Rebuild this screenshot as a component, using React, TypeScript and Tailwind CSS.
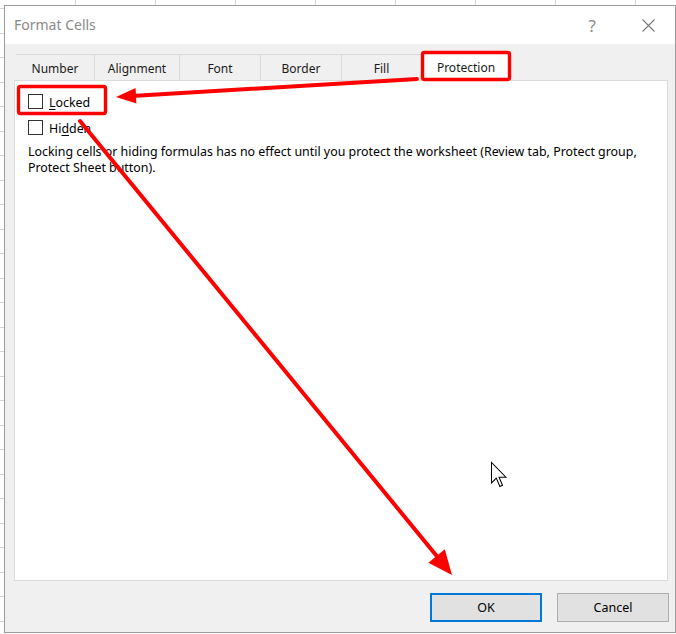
import React from "react";

export default function App() {
  return (
    <div className="relative w-[676px] h-[634px] overflow-hidden bg-white font-['Noto_Sans',sans-serif] text-black">
      {/* Excel grid behind the dialog */}
      <div className="h-[5px] bg-[repeating-linear-gradient(to_right,#ffffff_0px,#ffffff_75px,#d4d4d4_75px,#d4d4d4_76px,#ffffff_76px,#ffffff_80px)]" />
      <div className="flex">
        <div className="w-[4px] h-[629px] shrink-0 bg-[repeating-linear-gradient(to_bottom,#ffffff_0px,#ffffff_3px,#d4d4d4_3px,#d4d4d4_4px,#ffffff_4px,#ffffff_24.5px)]" />

        {/* Dialog */}
        <div className="w-[672px] h-[628px] shrink-0 border border-[#9c9c9c] bg-[#f0f0f0] flex flex-col">
          {/* Title bar */}
          <div className="h-[38px] shrink-0 bg-white flex items-center pl-[9px]">
            <span className="text-[14px] text-[#8a8a8a] leading-none">Format Cells</span>
            <span className="ml-auto mr-[46px] text-[17px] text-[#8a8a8a] leading-none">?</span>
            <svg width="13" height="13" viewBox="0 0 13 13" className="mr-[20px]">
              <path d="M0.5 0.5 L12.5 12.5 M12.5 0.5 L0.5 12.5" stroke="#7a7a7a" strokeWidth="1.1" fill="none" />
            </svg>
          </div>

          {/* Body */}
          <div className="pl-[9px] pt-[7px] flex flex-col">
            {/* Tabs */}
            <div className="ml-[2px] flex items-end h-[29px] text-[12px] text-[#1a1a1a]">
              <div className="w-[79px] h-[26px] border-t border-r border-[#dadada] flex items-center justify-center pt-[2px]">Number</div>
              <div className="w-[85px] h-[26px] border-t border-r border-[#dadada] flex items-center justify-center pt-[2px]">Alignment</div>
              <div className="w-[81px] h-[26px] border-t border-r border-[#dadada] flex items-center justify-center pt-[2px]">Font</div>
              <div className="w-[81px] h-[26px] border-t border-r border-[#dadada] flex items-center justify-center pt-[2px]">Border</div>
              <div className="w-[79px] h-[26px] border-t border-[#dadada] flex items-center justify-center pt-[2px]">Fill</div>
              <div className="relative z-10 -mb-px w-[90px] h-[30px] bg-white border-l border-t border-r border-[#dadada] flex items-center justify-center pt-[3px]">Protection</div>
            </div>

            {/* Panel */}
            <div className="w-[654px] h-[501px] border border-[#dadada] bg-white pl-[13px] pt-[13px] text-[12.4px]">
              <div className="flex items-center h-[15px]">
                <div className="w-[15px] h-[15px] border border-[#333333] bg-white" />
                <span className="ml-[6px] leading-none pt-[4px]">
                  <span className="underline underline-offset-2">L</span>ocked
                </span>
              </div>
              <div className="flex items-center h-[15px] mt-[11px]">
                <div className="w-[15px] h-[15px] border border-[#333333] bg-white" />
                <span className="ml-[6px] leading-none pt-[3px]">
                  Hi<span className="underline underline-offset-2">d</span>den
                </span>
              </div>
              <p className="mt-[9px] leading-[16px] whitespace-nowrap">
                Locking cells or hiding formulas has no effect until you protect the worksheet (Review tab, Protect group,
                <br />
                Protect Sheet button).
              </p>
            </div>

            {/* Buttons */}
            <div className="w-[655px] mt-[12px] flex justify-end gap-[15px] text-[12.5px]">
              <button className="w-[112px] h-[29px] border-2 border-[#0078d7] bg-[#e1e1e1] flex items-center justify-center pt-[2px]">OK</button>
              <button className="w-[112px] h-[29px] border border-[#adadad] bg-[#e1e1e1] flex items-center justify-center pt-[2px]">Cancel</button>
            </div>
          </div>
        </div>
      </div>

      {/* Annotation overlay */}
      <svg className="absolute left-0 top-0 z-20 pointer-events-none" width="676" height="634" viewBox="0 0 676 634">
        <rect x="18.5" y="86.5" width="87" height="27" rx="2" fill="none" stroke="#ff0000" strokeWidth="3.4" />
        <rect x="422.5" y="52.5" width="87" height="27" rx="2" fill="none" stroke="#ff0000" strokeWidth="3.4" />
        <line x1="417" y1="79" x2="132" y2="96" stroke="#ff0000" strokeWidth="4" strokeLinecap="round" />
        <polygon points="116,97 136.4,103.6 135.6,88" fill="#ff0000" />
        <line x1="80" y1="121" x2="440" y2="560" stroke="#ff0000" strokeWidth="4" strokeLinecap="round" />
        <polygon points="452,575 444.8,549.2 428.4,562.8" fill="#ff0000" />
        <g transform="translate(491.5 462.5) scale(1.2)">
          <path d="M0 0 L0 17 L4 13 L7 20 L9.2 19 L6.3 12.2 L12 12.2 Z" fill="#ffffff" stroke="#000000" strokeWidth="0.85" strokeLinejoin="miter" />
        </g>
      </svg>
    </div>
  );
}
